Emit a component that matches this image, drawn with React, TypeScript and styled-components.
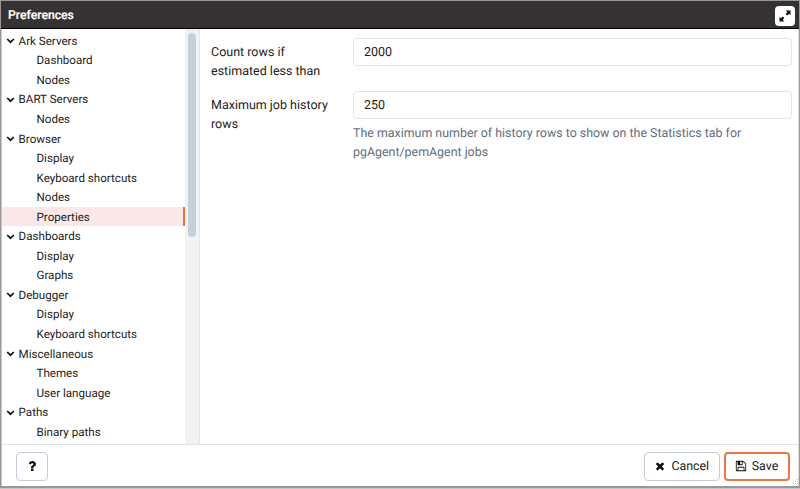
import React from "react";
import styled, { createGlobalStyle, css } from "styled-components";

const GlobalStyle = createGlobalStyle`
  * { box-sizing: border-box; }
  body { margin: 0; background: #c9c8c8; font-family: Roboto, sans-serif; color: #222; overflow: hidden; text-rendering: geometricPrecision; }
`;

const Dialog = styled.div`
  display: flex;
  flex-direction: column;
  width: 800px;
  height: 488px;
  border: solid #999798;
  border-width: 1px 1px 2px 1px;
  background: #fff;
  box-shadow: inset 1px 0 #c9c8c8, inset -1px 0 #dedede;
`;

const Header = styled.header`
  display: flex;
  align-items: center;
  justify-content: space-between;
  flex: none;
  height: 28px;
  padding: 0 4px 0 7px;
  background: #363233;
  border-bottom: 1px solid #000;
`;

const Title = styled.h1`
  margin: 0;
  font-size: 12.2px;
  line-height: 18px;
  font-weight: 500;
  color: #fff;
  -webkit-text-stroke: 0.2px #fff;
`;

const ExpandButton = styled.button`
  display: flex;
  align-items: center;
  justify-content: center;
  width: 20px;
  height: 20px;
  margin-top: 2px;
  padding: 0;
  border: 0;
  border-radius: 4px;
  background: #fff;
`;

const Content = styled.div`
  display: flex;
  flex: 1;
  min-height: 0;
`;

const Sidebar = styled.nav`
  display: flex;
  width: 198px;
  margin-left: 1px;
  border-right: 1px solid #e3e6ec;
  overflow: hidden;
`;

const Tree = styled.div`
  flex: none;
  width: 183px;
  padding-top: 2px;
`;

const TreeRow = styled.div<{ $leaf: boolean; $selected: boolean }>`
  display: flex;
  align-items: center;
  height: 19.56px;
  padding-left: ${(p) => (p.$leaf ? 34.5 : 4)}px;
  font-size: 11.6px;
  white-space: nowrap;
  ${(p) => p.$selected && css`
    background: #f9e8e7;
    border-right: 2px solid #dd7640;
  `}
`;

const Chevron = styled.svg`
  width: 9px;
  height: 9px;
  margin-right: 3.6px;
`;

const ScrollTrack = styled.div`
  flex: 1;
  padding: 4px 3px 0 3px;
  background: #f0f2f4;
`;

const ScrollThumb = styled.div`
  width: 8px;
  height: 204px;
  border-radius: 4px;
  background: #c8d0d7;
`;

const Form = styled.main`
  flex: 1;
  padding: 9px 7px 0 11px;
`;

const Field = styled.div<{ $gap?: number }>`
  display: grid;
  grid-template-columns: 142px 1fr;
  margin-bottom: ${(p) => p.$gap ?? 0}px;
`;

const Label = styled.label`
  padding: 5px 15px 0 0;
  font-size: 12.5px;
  line-height: 19px;
`;

const Input = styled.input`
  display: block;
  width: 100%;
  height: 28px;
  padding: 0 10px;
  border: 1px solid #e2e4ea;
  border-radius: 4px;
  outline: none;
  font: 12.5px Roboto, sans-serif;
  color: #222;
  text-rendering: inherit;
`;

const Help = styled.div`
  padding-top: 5px;
  font-size: 12.42px;
  line-height: 19px;
  white-space: pre-line;
  color: #5f6e7e;
`;

const Footer = styled.footer`
  display: flex;
  align-items: flex-start;
  gap: 4px;
  flex: none;
  height: 42px;
  margin: 0 1px;
  padding: 7px 8.500px 0 14px;
  border-top: 1px solid #e2e4ea;
`;

const Button = styled.button<{ $width: number; $primary?: boolean; $push?: boolean }>`
  display: flex;
  align-items: center;
  justify-content: center;
  gap: 5px;
  width: ${(p) => p.$width}px;
  height: 29px;
  padding: 0 0 1px;
  margin-right: ${(p) => (p.$push ? "auto" : 0)};
  border: ${(p) => (p.$primary ? "2px solid #e37a45" : "1px solid #c5cbdb")};
  border-radius: 4px;
  background: #fff;
  font: 12.4px Roboto, sans-serif;
  color: #222;
  text-rendering: inherit;
`;

const Icon = styled.svg<{ $size: number }>`
  width: ${(p) => p.$size}px;
  height: ${(p) => p.$size}px;
  fill: #111;
`;

const Grip = styled.svg`
  position: fixed;
  left: 792px;
  top: 479px;
  width: 7px;
  height: 7px;
  fill: #bbb;
`;

const groups: [string, string[]][] = [
  ["Ark Servers", ["Dashboard", "Nodes"]],
  ["BART Servers", ["Nodes"]],
  ["Browser", ["Display", "Keyboard shortcuts", "Nodes", "Properties"]],
  ["Dashboards", ["Display", "Graphs"]],
  ["Debugger", ["Display", "Keyboard shortcuts"]],
  ["Miscellaneous", ["Themes", "User language"]],
  ["Paths", ["Binary paths"]],
];

export default function App() {
  return (
    <>
      <GlobalStyle />
      <Dialog>
        <Header>
          <Title>Preferences</Title>
          <ExpandButton aria-label="Maximize">
            <Icon $size={12} viewBox="0 0 12 12">
              <path d="M6.800 0.500H11.500v4.700L10 3.800 8.200 5.600 6.600 4 8.300 2.200zM5.200 11.500H0.500V6.800l1.500 1.400L3.800 6.400 5.400 8 3.700 9.800z" />
            </Icon>
          </ExpandButton>
        </Header>
        <Content>
          <Sidebar>
            <Tree>
              {groups.map(([name, items]) => (
                <React.Fragment key={name}>
                  <TreeRow $leaf={false} $selected={false}>
                    <Chevron viewBox="0 0 9 9">
                      <path d="M1.200 3 4.500 6.200 7.800 3" fill="none" stroke="#111" strokeWidth="1.7" />
                    </Chevron>
                    {name}
                  </TreeRow>
                  {items.map((item) => (
                    <TreeRow key={item} $leaf $selected={item === "Properties"}>
                      {item}
                    </TreeRow>
                  ))}
                </React.Fragment>
              ))}
            </Tree>
            <ScrollTrack>
              <ScrollThumb />
            </ScrollTrack>
          </Sidebar>
          <Form>
            <Field $gap={10}>
              <Label htmlFor="count">Count rows if estimated less than</Label>
              <Input id="count" defaultValue="2000" />
            </Field>
            <Field>
              <Label htmlFor="history">Maximum job history rows</Label>
              <div>
                <Input id="history" defaultValue="250" />
                <Help>{"The maximum number of history rows to show on the Statistics tab for\npgAgent/pemAgent jobs"}</Help>
              </div>
            </Field>
          </Form>
        </Content>
        <Footer>
          <Button $width={32} $push aria-label="Help">
            <Icon $size={14} viewBox="0 0 1792 1792">
              <path d="M1088 1256v240q0 16-12 28t-28 12h-240q-16 0-28-12t-12-28v-240q0-16 12-28t28-12h240q16 0 28 12t12 28zm316-600q0 54-15.500 101t-35 76.500-55 59.500-57.500 43.500-61 35.500q-41 23-68.500 65t-27.500 67q0 17-12 32.500t-28 15.500h-240q-15 0-25.500-18.500t-10.500-37.500v-45q0-83 65-156.500t143-108.500q59-27 84-56t25-76q0-42-46.500-74t-107.500-32q-65 0-108 29-35 25-107 115-13 16-31 16-12 0-25-8l-164-125q-13-10-15.500-25t5.500-28q160-266 464-266 80 0 161 31t146 83 106 127.500 41 158.500z" />
            </Icon>
          </Button>
          <Button $width={75.5}>
            <Icon $size={12} viewBox="0 0 1792 1792">
              <path d="M1490 1322q0 40-28 68l-136 136q-28 28-68 28t-68-28l-294-294-294 294q-28 28-68 28t-68-28l-136-136q-28-28-28-68t28-68l294-294-294-294q-28-28-28-68t28-68l136-136q28-28 68-28t68 28l294 294 294-294q28-28 68-28t68 28l136 136q28 28 28 68t-28 68l-294 294 294 294q28 28 28 68z" />
            </Icon>
            Cancel
          </Button>
          <Button $width={66} $primary>
            <Icon $size={12} viewBox="0 0 1792 1792">
              <path d="M512 1536h768v-384h-768v384zm896 0h128v-896q0-14-10-38.500t-20-34.500l-281-281q-10-10-34-20t-39-10v416q0 40-28 68t-68 28h-576q-40 0-68-28t-28-68v-416h-128v1280h128v-416q0-40 28-68t68-28h832q40 0 68 28t28 68v416zm-384-928v-320q0-13-9.500-22.500t-22.500-9.500h-192q-13 0-22.500 9.500t-9.500 22.500v320q0 13 9.500 22.500t22.500 9.500h192q13 0 22.500-9.500t9.500-22.500zm640 32v928q0 40-28 68t-68 28h-1344q-40 0-68-28t-28-68v-1344q0-40 28-68t68-28h928q40 0 88 20t76 48l280 280q28 28 48 76t20 88z" />
            </Icon>
            Save
          </Button>
        </Footer>
      </Dialog>
      <Grip viewBox="0 0 7 7">
        <path d="M5 0h1v1H5zM3 2h1v1H3zM5 2h1v1H5zM1 4h1v1H1zM3 4h1v1H3zM5 4h1v1H5z" />
      </Grip>
    </>
  );
}
